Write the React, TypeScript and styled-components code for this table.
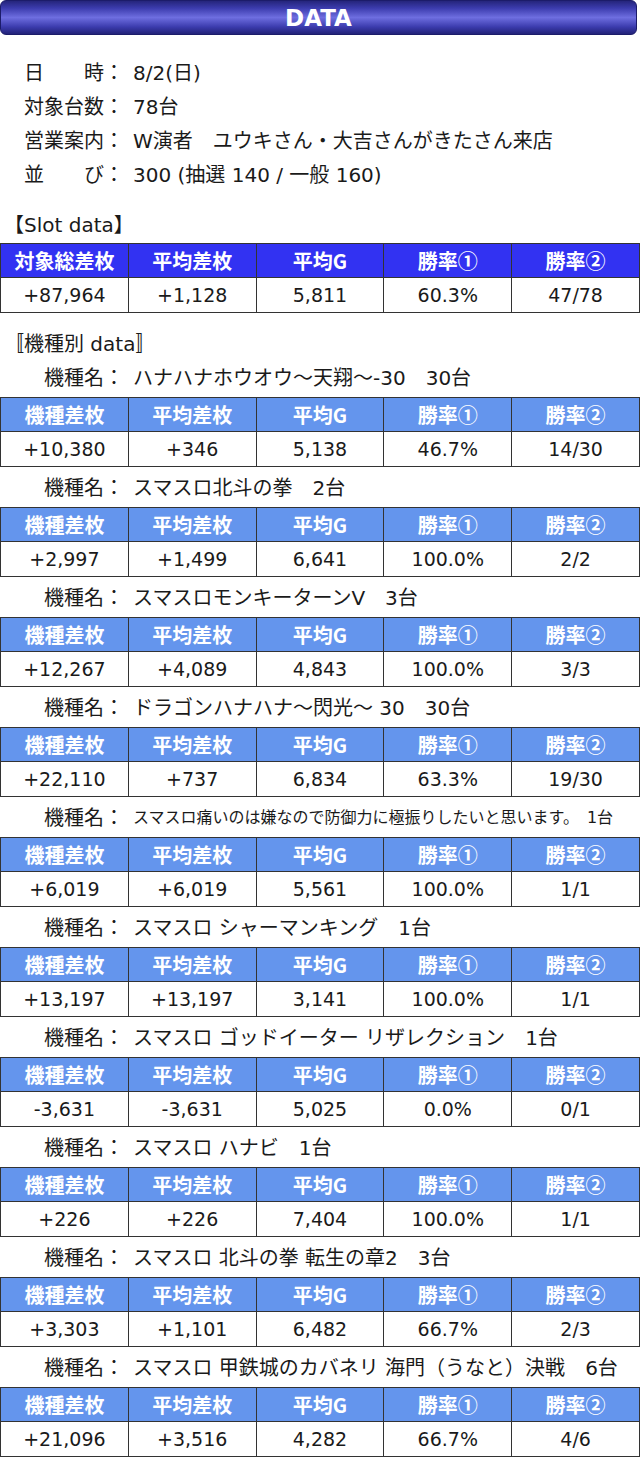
import React from "react";
import styled, { createGlobalStyle } from "styled-components";

type Row = [string, string, string, string, string];

interface Machine {
  name: string;
  count: string;
  small?: boolean;
  data: Row;
}

const machines: Machine[] = [
  { name: "ハナハナホウオウ～天翔～-30", count: "30台", data: ["+10,380", "+346", "5,138", "46.7%", "14/30"] },
  { name: "スマスロ北斗の拳", count: "2台", data: ["+2,997", "+1,499", "6,641", "100.0%", "2/2"] },
  { name: "スマスロモンキーターンV", count: "3台", data: ["+12,267", "+4,089", "4,843", "100.0%", "3/3"] },
  { name: "ドラゴンハナハナ～閃光～ 30", count: "30台", data: ["+22,110", "+737", "6,834", "63.3%", "19/30"] },
  {
    name: "スマスロ痛いのは嫌なので防御力に極振りしたいと思います。",
    count: "1台",
    small: true,
    data: ["+6,019", "+6,019", "5,561", "100.0%", "1/1"],
  },
  { name: "スマスロ シャーマンキング", count: "1台", data: ["+13,197", "+13,197", "3,141", "100.0%", "1/1"] },
  { name: "スマスロ ゴッドイーター リザレクション", count: "1台", data: ["-3,631", "-3,631", "5,025", "0.0%", "0/1"] },
  { name: "スマスロ ハナビ", count: "1台", data: ["+226", "+226", "7,404", "100.0%", "1/1"] },
  { name: "スマスロ 北斗の拳 転生の章2", count: "3台", data: ["+3,303", "+1,101", "6,482", "66.7%", "2/3"] },
  { name: "スマスロ 甲鉄城のカバネリ 海門（うなと）決戦", count: "6台", data: ["+21,096", "+3,516", "4,282", "66.7%", "4/6"] },
];

const info: [string, string][] = [
  ["日　　時：", "8/2(日)"],
  ["対象台数：", "78台"],
  ["営業案内：", "W演者　ユウキさん・大吉さんがきたさん来店"],
  ["並　　び：", "300 (抽選 140 / 一般 160)"],
];

const slotHead: Row = ["対象総差枚", "平均差枚", "平均G", "勝率①", "勝率②"];
const machineHead: Row = ["機種差枚", "平均差枚", "平均G", "勝率①", "勝率②"];

const DataTable: React.FC<{ head: Row; row: Row; tone: "slot" | "machine" }> = ({ head, row, tone }) => (
  <Grid>
    {head.map((h) => (
      <HeadCell key={h} $tone={tone}>{h}</HeadCell>
    ))}
    {row.map((v, i) => (
      <DataCell key={i}>{v}</DataCell>
    ))}
  </Grid>
);

export default function App() {
  return (
    <Page>
      <GlobalStyle />
      <TitleBar>DATA</TitleBar>
      <InfoList>
        {info.map(([k, v]) => (
          <InfoRow key={k}>
            <InfoKey>{k}</InfoKey>
            <span>{v}</span>
          </InfoRow>
        ))}
      </InfoList>
      <SlotLabel>【Slot data】</SlotLabel>
      <DataTable head={slotHead} row={["+87,964", "+1,128", "5,811", "60.3%", "47/78"]} tone="slot" />
      <SectionLabel>〚機種別 data〛</SectionLabel>
      {machines.map((m) => (
        <React.Fragment key={m.name}>
          <MachineLine>
            <MachineKey>機種名：</MachineKey>
            <MachineName $small={m.small}>
              {m.name}　{m.count}
            </MachineName>
          </MachineLine>
          <DataTable head={machineHead} row={m.data} tone="machine" />
        </React.Fragment>
      ))}
    </Page>
  );
}

const GlobalStyle = createGlobalStyle`
  html, body {
    margin: 0;
    padding: 0;
    background: #fff;
  }
`;

const Page = styled.div`
  width: 640px;
  font-family: "DejaVu Sans", "Noto Sans CJK JP", sans-serif;
  color: #1a1a1a;
`;

const TitleBar = styled.div`
  height: 35px;
  margin-right: 3px;
  box-sizing: border-box;
  border: 1px solid #1c1c6a;
  border-radius: 6px;
  background: linear-gradient(
    to bottom,
    #25257c 0%,
    #3c3cae 22%,
    #6e6ee0 50%,
    #3c3cae 78%,
    #222278 100%
  );
  color: #fff;
  font-weight: bold;
  font-size: 23px;
  display: flex;
  align-items: center;
  justify-content: center;
`;

const InfoList = styled.div`
  padding: 19px 0 0 24px;
`;

const InfoRow = styled.div`
  display: flex;
  align-items: center;
  height: 34px;
  font-size: 20px;
`;

const InfoKey = styled.span`
  width: 109px;
  flex-shrink: 0;
`;

const SlotLabel = styled.div`
  padding: 21px 0 4px 4px;
  line-height: 28px;
  font-size: 20px;
`;

const SectionLabel = styled.div`
  padding: 18px 0 0 4px;
  line-height: 26px;
  font-size: 20px;
`;

const MachineLine = styled.div`
  height: 40px;
  box-sizing: border-box;
  padding: 0 0 5px 44px;
  display: flex;
  align-items: flex-end;
  font-size: 20px;
  line-height: 28px;
  white-space: nowrap;
`;

const MachineKey = styled.span`
  width: 89px;
  flex-shrink: 0;
`;

const MachineName = styled.span<{ $small?: boolean }>`
  font-size: ${(p) => (p.$small ? "16px" : "20px")};
`;

const Grid = styled.div`
  display: grid;
  grid-template-columns: repeat(5, 1fr);
  border-top: 1px solid #333;
  border-left: 1px solid #333;
`;

const Cell = styled.div`
  border-right: 1px solid #333;
  border-bottom: 1px solid #333;
  display: flex;
  align-items: center;
  justify-content: center;
  white-space: nowrap;
`;

const HeadCell = styled(Cell)<{ $tone: "slot" | "machine" }>`
  height: 33px;
  background: ${(p) => (p.$tone === "slot" ? "#3232f2" : "#6495ed")};
  color: #fff;
  font-family: "Noto Sans CJK JP", "DejaVu Sans", sans-serif;
  font-weight: bold;
  font-size: 20px;
`;

const DataCell = styled(Cell)`
  height: 34px;
  background: #fff;
  color: #1a1a1a;
  font-size: 19px;
`;
